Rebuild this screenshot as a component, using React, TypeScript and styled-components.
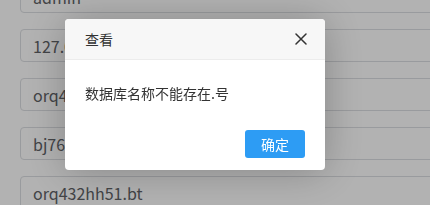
import styled, { createGlobalStyle } from 'styled-components';

const GlobalStyle = createGlobalStyle`
    html, body {
        margin: 0;
        padding: 0;
        background: #fff;
        overflow: hidden;
    }
    body {
        font-family: "Noto Sans CJK SC", "Noto Sans", sans-serif;
    }
`;

const fields = ['admin', '127.0.0.1', 'orq432hh51', 'bj76r9x0', 'orq432hh51.bt'];

export default function App() {
    return (
        <>
            <GlobalStyle />
            <Page>
                <FieldList>
                    {fields.map((f) => (
                        <Field key={f} readOnly value={f} />
                    ))}
                </FieldList>
            </Page>
            <Mask />
            <Dialog>
                <DialogHeader>
                    <DialogTitle>查看</DialogTitle>
                    <CloseButton aria-label='close'>
                        <svg width='12' height='12' viewBox='0 0 12 12'>
                            <path d='M1 1 L11 11 M11 1 L1 11' stroke='#333' strokeWidth='1.5' strokeLinecap='round' fill='none' />
                        </svg>
                    </CloseButton>
                </DialogHeader>
                <DialogBody>数据库名称不能存在.号</DialogBody>
                <DialogFooter>
                    <PrimaryButton>确定</PrimaryButton>
                </DialogFooter>
            </Dialog>
        </>
    );
}

const Page = styled.div`
    width: 430px;
    height: 205px;
    overflow: hidden;
    padding-left: 20px;
    box-sizing: border-box;
`;

const FieldList = styled.div`
    display: flex;
    flex-direction: column;
    gap: 16px;
    margin-top: -20px;
`;

const Field = styled.input`
    width: 480px;
    height: 33px;
    box-sizing: border-box;
    border: 1px solid #dcdee2;
    border-radius: 4px;
    padding: 0 12px;
    font-family: "Noto Sans CJK SC", "Noto Sans", sans-serif;
    font-size: 16px;
    color: #606266;
    background: #fff;
    outline: none;
`;

const Mask = styled.div`
    position: fixed;
    inset: 0;
    background: rgba(0, 0, 0, 0.3);
`;

const Dialog = styled.div`
    position: fixed;
    left: 65px;
    top: 19px;
    width: 260px;
    height: 151px;
    background: #fff;
    border-radius: 4px;
    overflow: hidden;
    display: flex;
    flex-direction: column;
    box-shadow: 0 2px 40px rgba(0, 0, 0, 0.25);
`;

const DialogHeader = styled.div`
    height: 40px;
    flex-shrink: 0;
    background: #f7f7f7;
    border-bottom: 1px solid #ececec;
    display: flex;
    align-items: center;
    justify-content: space-between;
    padding: 0 18px 0 20px;
`;

const DialogTitle = styled.div`
    font-size: 14px;
    color: #333;
    line-height: 20px;
`;

const CloseButton = styled.div`
    width: 12px;
    height: 12px;
    display: flex;
    cursor: pointer;
`;

const DialogBody = styled.div`
    padding: 23px 20px 0;
    font-size: 14px;
    line-height: 20px;
    color: #333;
`;

const DialogFooter = styled.div`
    margin-top: auto;
    display: flex;
    justify-content: flex-end;
    padding: 0 20px 12px;
`;

const PrimaryButton = styled.button`
    width: 60px;
    height: 28px;
    border: none;
    border-radius: 3px;
    background: #2d9cf4;
    color: #fff;
    font-family: "Noto Sans CJK SC", "Noto Sans", sans-serif;
    font-size: 14px;
    cursor: pointer;
`;
